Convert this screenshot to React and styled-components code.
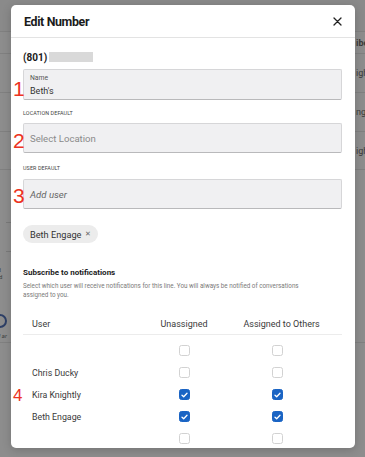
import styled, { createGlobalStyle } from "styled-components";

const GlobalStyle = createGlobalStyle`
  html, body { margin: 0; padding: 0; }
  body {
    font-family: Roboto, "Liberation Sans", Arial, sans-serif;
    -webkit-font-smoothing: antialiased;
  }
  * { box-sizing: border-box; }
`;

const Screen = styled.div`
  position: relative;
  width: 365px;
  height: 457px;
  overflow: hidden;
  background: #8d8d8d;
`;

/* page that sits behind the dimmed overlay */
const BackPage = styled.div`
  display: flex;
  flex-direction: column;
`;

const BackRow = styled.div`
  display: flex;
  align-items: center;
  height: ${(p) => p.$h}px;
  border-bottom: 1px solid ${(p) => (p.$line ? "#808080" : "transparent")};
  background: ${(p) => p.$bg || "transparent"};
  overflow: hidden;
  font-size: 9px;
  color: #3a3a3a;
  font-weight: ${(p) => (p.$bold ? 700 : 400)};
`;

const BackText = styled.span`
  padding-left: 356px;
  white-space: nowrap;
`;

const BackBox = styled.div`
  width: 6px;
  height: 30px;
  margin: 52px 0 0 6px;
  border: 1px solid #7a7a7a;
  border-left: none;
`;

const BackNote = styled.div`
  margin-top: 14px;
  font-size: 6px;
  line-height: 7px;
  color: #3d3d3d;
  margin-left: -9px;
`;

const BackRing = styled.div`
  width: 14px;
  height: 14px;
  margin: 34px 0 0 -7px;
  border: 2px solid #2d3f66;
  border-radius: 50%;
`;

const BackItalic = styled.div`
  margin-top: 4px;
  font-size: 6px;
  font-style: italic;
  color: #3d3d3d;
  margin-left: -3px;
  padding-bottom: 3px;
  border-bottom: 1px solid #808080;
`;

const Overlay = styled.div`
  position: absolute;
  inset: 0;
  padding: 5px 10px 9px 11px;
`;

const Modal = styled.div`
  width: 344px;
  height: 443px;
  background: #ffffff;
  border-radius: 5px;
  overflow: hidden;
  box-shadow: 0 2px 10px rgba(0, 0, 0, 0.18);
`;

const Header = styled.div`
  display: flex;
  align-items: center;
  justify-content: space-between;
  height: 33px;
  padding: 0 13px 0 13px;
  border-bottom: 1px solid #e3e3e3;
`;

const Title = styled.h2`
  margin: 0;
  font-size: 12.4px;
  font-weight: 700;
  color: #1b1b1b;
  letter-spacing: -0.35px;
`;

const CloseButton = styled.button`
  display: flex;
  padding: 0;
  border: none;
  background: none;
  color: #222;
`;

const Body = styled.div`
  position: relative;
  display: flex;
  flex-direction: column;
  padding: 0 13px 0 12px;
`;

const PhoneLine = styled.div`
  display: flex;
  align-items: center;
  gap: 2px;
  height: 14px;
  margin-top: 12px;
  font-size: 10px;
  font-weight: 700;
  color: #1b1b1b;
`;

const Redacted = styled.span`
  width: 44px;
  height: 10px;
  background: #d9d9d9;
`;

const Field = styled.div`
  position: relative;
  margin-top: ${(p) => p.$top}px;
`;

const Marker = styled.span`
  position: absolute;
  left: -10px;
  top: ${(p) => p.$top}px;
  font-size: ${(p) => p.$size || 21}px;
  line-height: 1;
  font-weight: 300;
  color: #ec3322;
  font-family: "Liberation Sans", Arial, sans-serif;
`;

const InputBox = styled.div`
  display: flex;
  flex-direction: column;
  justify-content: ${(p) => (p.$stacked ? "flex-start" : "center")};
  height: ${(p) => p.$h || 30}px;
  padding: ${(p) => (p.$stacked ? "4px 6px 0" : "0 6px")};
  background: #f0f0f2;
  border: 1px solid #d6d6d8;
  border-bottom-color: #b9b9bb;
  border-radius: 2px;
`;

const InputLabel = styled.span`
  font-size: 6.8px;
  line-height: 9px;
  color: #555;
`;

const InputValue = styled.span`
  margin-top: 2px;
  font-size: 9px;
  line-height: 12px;
  color: #333;
`;

const Placeholder = styled.span`
  font-size: 9.6px;
  font-style: ${(p) => (p.$italic ? "italic" : "normal")};
  color: ${(p) => (p.$italic ? "#666" : "#8a8a8a")};
`;

const SectionLabel = styled.div`
  height: 8px;
  margin-top: ${(p) => p.$top}px;
  font-size: 5.4px;
  line-height: 8px;
  color: #444;
  text-transform: uppercase;
  letter-spacing: 0.1px;
`;

const Chip = styled.div`
  display: flex;
  align-items: center;
  align-self: flex-start;
  gap: 4px;
  height: 18px;
  margin-top: 16px;
  padding: 0 7px;
  border-radius: 9px;
  background: #ececec;
  font-size: 9.2px;
  color: #333;
`;

const ChipX = styled.span`
  font-size: 7px;
  color: #666;
`;

const SubTitle = styled.div`
  margin-top: 24px;
  font-size: 8px;
  line-height: 11px;
  font-weight: 700;
  color: #1b1b1b;
`;

const Description = styled.p`
  margin: 4px 0 0;
  font-size: 6.3px;
  line-height: 9px;
  color: #7a7a7a;
  padding-right: 20px;
`;

const Table = styled.div`
  position: relative;
  display: flex;
  flex-direction: column;
  margin-top: 13px;
`;

const Row = styled.div`
  display: grid;
  grid-template-columns: 114px 94px 101px;
  align-items: center;
  height: 22px;
  font-size: ${(p) => (p.$head ? 9 : 8.8)}px;
  color: #3a3a3a;
  border-bottom: 1px solid ${(p) => (p.$head ? "#ececec" : "transparent")};
  margin-bottom: ${(p) => (p.$head ? 5 : 0)}px;
`;

const NameCell = styled.div`
  padding-left: 9px;
  white-space: nowrap;
`;

const CenterCell = styled.div`
  display: flex;
  justify-content: center;
  padding-right: ${(p) => p.$shift || 0}px;
  white-space: nowrap;
`;

const Box = styled.span`
  display: flex;
  align-items: center;
  justify-content: center;
  width: 11px;
  height: 11px;
  border-radius: 2.5px;
  border: 1px solid ${(p) => (p.$checked ? "#1a64c4" : "#d2d2d2")};
  background: ${(p) => (p.$checked ? "#1a64c4" : "#fff")};
`;

const Check = ({ checked }) => (
  <Box $checked={checked}>
    {checked && (
      <svg width="7" height="6" viewBox="0 0 7 6">
        <path d="M1 3.2 L2.7 4.8 L6 1.2" fill="none" stroke="#fff" strokeWidth="1.3" strokeLinecap="round" strokeLinejoin="round" />
      </svg>
    )}
  </Box>
);

const users = [
  { name: "", a: false, b: false },
  { name: "Chris Ducky", a: false, b: false },
  { name: "Kira Knightly", a: true, b: true, marker: "4" },
  { name: "Beth Engage", a: true, b: true },
  { name: "", a: false, b: false },
];

const Background = () => (
  <BackPage>
    <BackRow $h={32} $line $bg="#8a8a8a" />
    <BackRow $h={22} $line $bold><BackText>ibe</BackText></BackRow>
    <BackRow $h={39} $line><BackText>igh</BackText></BackRow>
    <BackRow $h={39} $line><BackText>nga</BackText></BackRow>
    <BackRow $h={38} $line><BackText>igh</BackText></BackRow>
    <BackBox />
    <BackNote>end<br />bled</BackNote>
    <BackRing />
    <BackItalic>d ar</BackItalic>
  </BackPage>
);

export default function App() {
  return (
    <Screen>
      <GlobalStyle />
      <Background />
      <Overlay>
        <Modal>
          <Header>
            <Title>Edit Number</Title>
            <CloseButton aria-label="Close">
              <svg width="9" height="9" viewBox="0 0 9 9">
                <path d="M1 1 L8 8 M8 1 L1 8" stroke="#222" strokeWidth="1.3" strokeLinecap="round" />
              </svg>
            </CloseButton>
          </Header>
          <Body>
            <PhoneLine>
              (801) <Redacted />
            </PhoneLine>

            <Field $top={5}>
              <Marker $top={9}>1</Marker>
              <InputBox $stacked $h={31}>
                <InputLabel>Name</InputLabel>
                <InputValue>Beth's</InputValue>
              </InputBox>
            </Field>

            <SectionLabel $top={9}>Location Default</SectionLabel>
            <Field $top={6}>
              <Marker $top={7}>2</Marker>
              <InputBox>
                <Placeholder>Select Location</Placeholder>
              </InputBox>
            </Field>

            <SectionLabel $top={11}>User Default</SectionLabel>
            <Field $top={7}>
              <Marker $top={6}>3</Marker>
              <InputBox>
                <Placeholder $italic>Add user</Placeholder>
              </InputBox>
            </Field>

            <Chip>
              Beth Engage <ChipX>✕</ChipX>
            </Chip>

            <SubTitle>Subscribe to notifications</SubTitle>
            <Description>
              Select which user will receive notifications for this line. You will always be notified of conversations
              assigned to you.
            </Description>

            <Table>
              <Row $head>
                <NameCell>User</NameCell>
                <CenterCell>Unassigned</CenterCell>
                <CenterCell>Assigned to Others</CenterCell>
              </Row>
              {users.map((u, i) => (
                <Field key={i} $top={0}>
                  {u.marker && <Marker $top={3} $size={17}>{u.marker}</Marker>}
                  <Row>
                    <NameCell>{u.name}</NameCell>
                    <CenterCell>
                      <Check checked={u.a} />
                    </CenterCell>
                    <CenterCell $shift={8}>
                      <Check checked={u.b} />
                    </CenterCell>
                  </Row>
                </Field>
              ))}
            </Table>
          </Body>
        </Modal>
      </Overlay>
    </Screen>
  );
}
